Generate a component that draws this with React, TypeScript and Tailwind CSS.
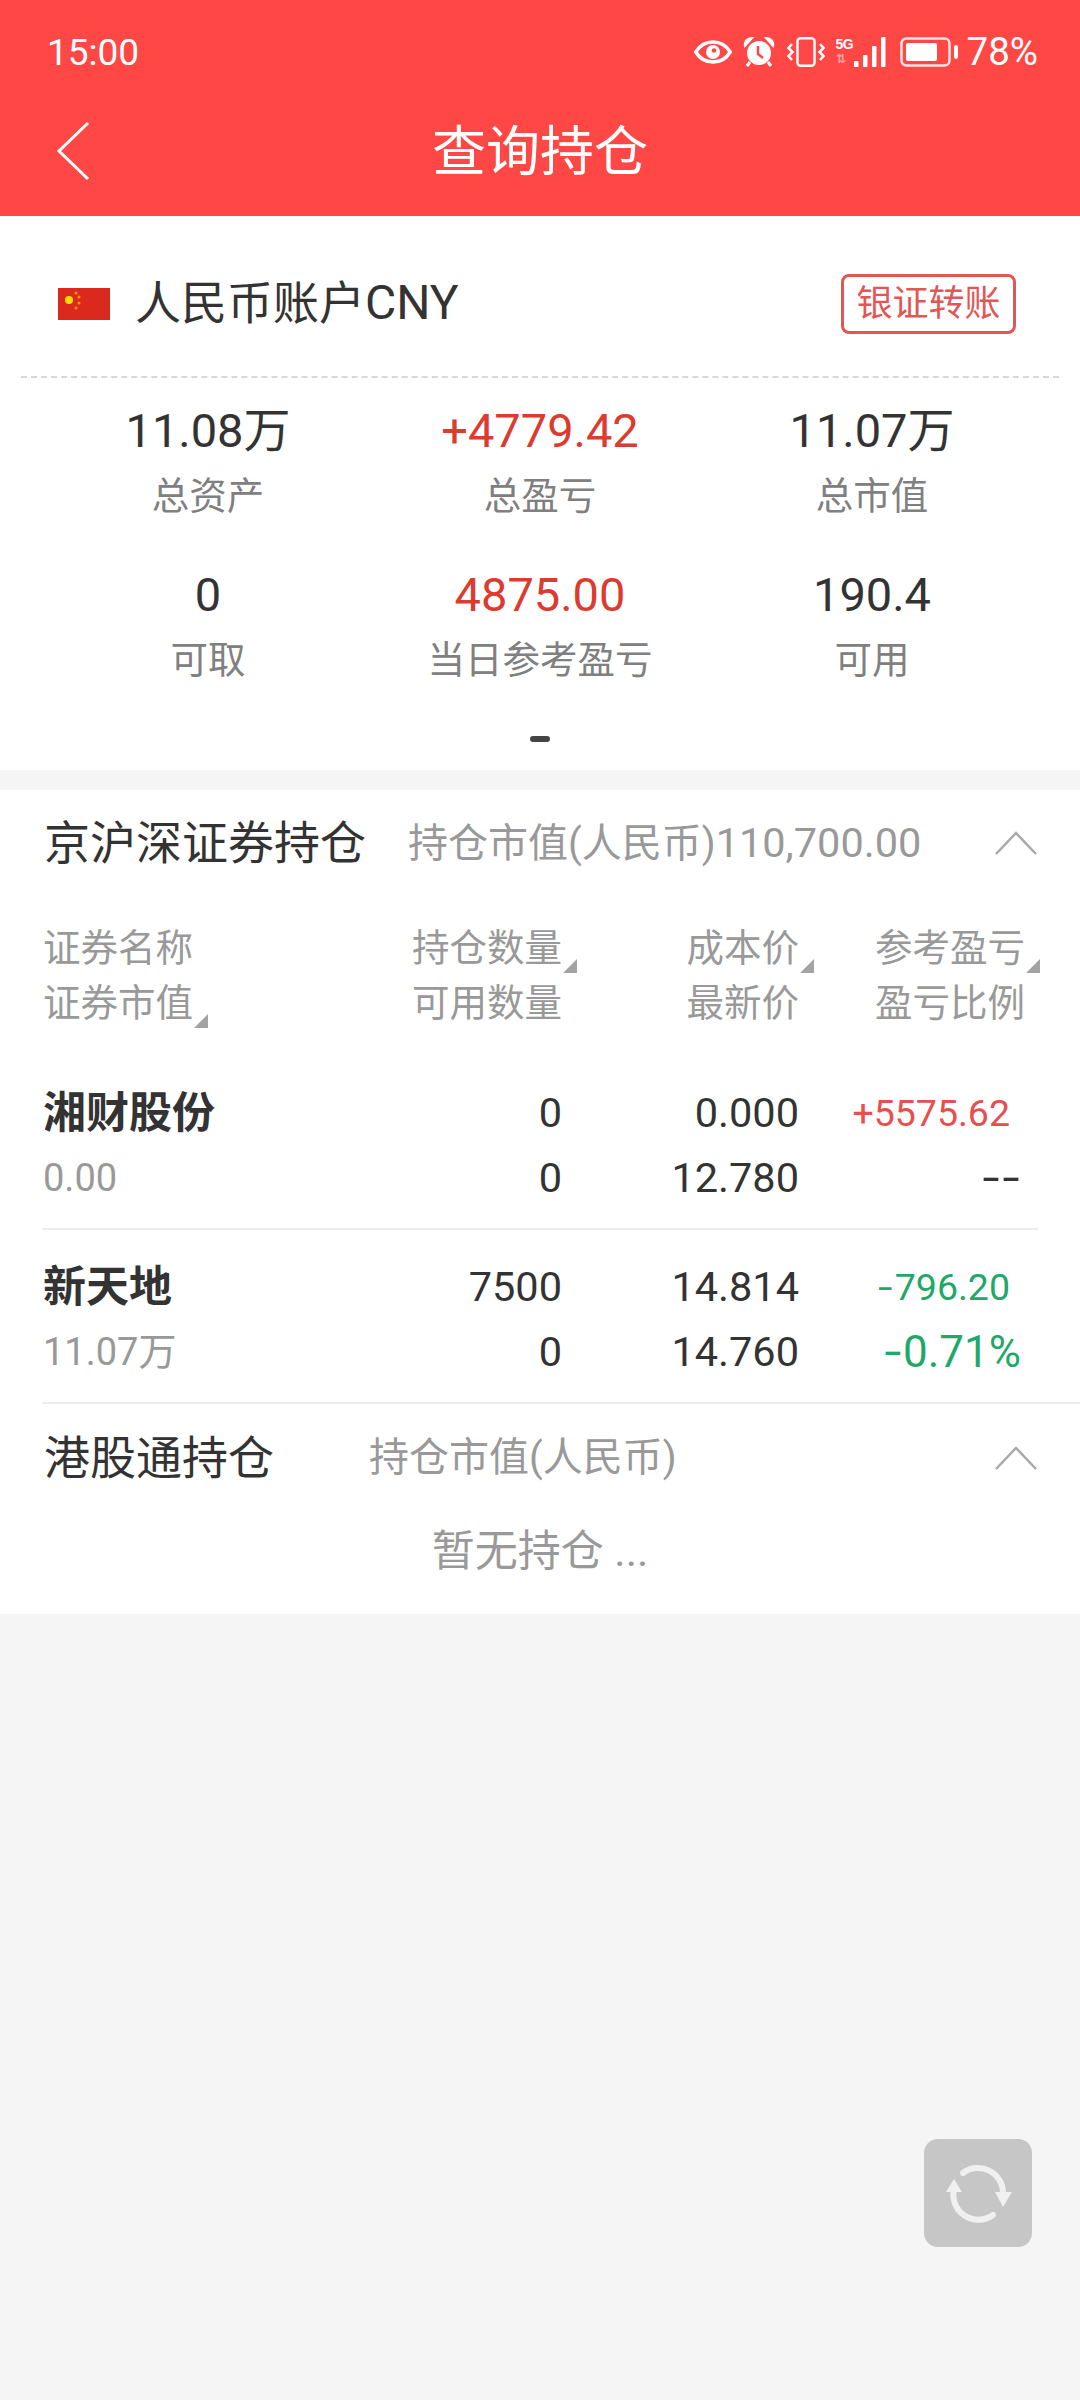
const FONT = "font-['Roboto','Noto_Sans_CJK_SC',sans-serif]";

const stats = [
  [
    { value: '11.08万', label: '总资产' },
    { value: '+4779.42', label: '总盈亏', red: true },
    { value: '11.07万', label: '总市值' },
  ],
  [
    { value: '0', label: '可取' },
    { value: '4875.00', label: '当日参考盈亏', red: true },
    { value: '190.4', label: '可用' },
  ],
];

function StatusIcons() {
  return (
    <div className="flex items-center">
      <svg width="38" height="24" viewBox="0 0 38 24" fill="none">
        <path d="M1.800 12C6 5 12 2 19 2s13 3 17.200 10C32 19 26 22 19 22S6 19 1.800 12Z" stroke="#fff" strokeWidth="3.500" />
        <circle cx="19" cy="12" r="7" fill="#fff" />
        <circle cx="20" cy="10.500" r="2.200" fill="#ff4745" />
      </svg>
      <svg className="ml-[11px]" width="32" height="30" viewBox="0 0 32 30" fill="none">
        <circle cx="16" cy="16" r="12" fill="#fff" />
        <path d="M2 9c-1-4 2-8 7-8L2 9ZM30 9c1-4-2-8-7-8L30 9Z" fill="#fff" stroke="#fff" strokeWidth="2" />
        <path d="M7 25l-3 4M25 25l3 4" stroke="#fff" strokeWidth="3" />
        <path d="M15 9v8l5 4" stroke="#ff4745" strokeWidth="2.500" />
      </svg>
      <svg className="ml-[12px]" width="38" height="30" viewBox="0 0 38 30" fill="none">
        <rect x="10.500" y="1.200" width="17" height="27.600" rx="3" stroke="#fff" strokeWidth="2.400" />
        <path d="M5 7L1.500 11l4 4-4 4 3.500 4M33 7l3.500 4-4 4 4 4-3.500 4" stroke="#fff" strokeWidth="2.500" />
      </svg>
      <div className="ml-[11px] flex h-[30px] w-[18px] flex-col items-start justify-start font-['Liberation_Sans',sans-serif]">
        <span className="text-[14px] leading-[14px] font-bold tracking-[-0.5px] text-white">5G</span>
        <span className="mt-[2px] text-[12px] leading-[12px] font-bold text-[#ff9d9c]">⇅</span>
      </div>
      <svg width="32" height="30" viewBox="0 0 32 30" fill="#fff">
        <rect x="0" y="24" width="4.500" height="6" rx="1" />
        <rect x="9" y="18" width="4.500" height="12" rx="1" />
        <rect x="18" y="9" width="4.500" height="21" rx="1" />
        <rect x="27" y="0" width="4.500" height="30" rx="1" />
      </svg>
      <svg className="ml-[14px]" width="58" height="30" viewBox="0 0 58 30" fill="none">
        <rect x="1.500" y="1.500" width="48" height="27" rx="5" stroke="#fff" strokeWidth="2.500" opacity="0.85" />
        <rect x="6" y="6" width="31" height="18" rx="2" fill="#fff" />
        <rect x="54" y="8" width="4" height="14" rx="2" fill="#fff" />
      </svg>
      <span className="ml-[9px] text-[38.5px] leading-none text-white">78%</span>
    </div>
  );
}

function Triangle() {
  return (
    <svg className="absolute bottom-[3px] right-[-15px]" width="14" height="14" viewBox="0 0 14 14">
      <polygon points="14,0 14,14 0,14" fill="#a3a3a3" />
    </svg>
  );
}

function Chevron() {
  return (
    <svg width="44" height="26" viewBox="0 0 44 26" fill="none">
      <path d="M2 24L22 3l20 21" stroke="#a8a8a8" strokeWidth="2.500" />
    </svg>
  );
}

function HeadCell({ text, sort }: { text: string; sort?: boolean }) {
  return (
    <span className="relative inline-block text-[37.5px] leading-[55px] text-[#999999]">
      {text}
      {sort && <Triangle />}
    </span>
  );
}

// the hyphens in the picture are much wider than Roboto's
function Signed({ text }: { text: string }) {
  const dashes = text.match(/^-+/)?.[0] ?? '';
  return (
    <>
      {dashes.split('').map((d, i) => (
        <span key={i} className="mx-[4px] inline-block scale-x-[1.4]">
          {d}
        </span>
      ))}
      {text.slice(dashes.length)}
    </>
  );
}

const rows = [
  {
    name: '湘财股份',
    mv: '0.00',
    qty: '0',
    avail: '0',
    cost: '0.000',
    last: '12.780',
    pl: '+5575.62',
    ratio: '--',
    plColor: 'text-[#e84e4e]',
    ratioColor: 'text-[#333333]',
  },
  {
    name: '新天地',
    mv: '11.07万',
    qty: '7500',
    avail: '0',
    cost: '14.814',
    last: '14.760',
    pl: '-796.20',
    ratio: '-0.71%',
    plColor: 'text-[#1fa868]',
    ratioColor: 'text-[#1fa868]',
  },
];

export default function App() {
  return (
    <div className={`flex h-[2400px] w-[1080px] flex-col overflow-hidden bg-[#f5f5f5] ${FONT}`}>
      <header className="h-[216px] bg-[#ff4745] text-white">
        <div className="flex h-[104px] items-center justify-between pr-[42px] pl-[47px]">
          <span className="text-[37px] leading-none">15:00</span>
          <StatusIcons />
        </div>
        <div className="relative flex h-[92px] items-center justify-center pt-[6px]">
          <svg className="absolute top-[17px] left-[56px]" width="34" height="60" viewBox="0 0 34 60" fill="none">
            <path d="M32 2L3 30l29 28" stroke="#fff" strokeWidth="3" />
          </svg>
          <h1 className="text-[54px] leading-none font-normal">查询持仓</h1>
        </div>
      </header>

      <section className="h-[554px] bg-white">
        <div className="flex h-[160px] items-center justify-between pt-[16px] pr-[64px] pl-[58px]">
          <div className="flex items-center">
            <svg width="52" height="32" viewBox="0 0 52 32">
              <rect width="52" height="32" fill="#dc291e" />
              <circle cx="11" cy="12" r="4" fill="#ffde00" />
              <circle cx="18" cy="5" r="1.500" fill="#ff9d00" />
              <circle cx="21" cy="9" r="1.500" fill="#ff9d00" />
              <circle cx="21" cy="15" r="1.500" fill="#ff9d00" />
              <circle cx="18" cy="20" r="1.500" fill="#ff9d00" />
            </svg>
            <span className="ml-[25px] mb-[2px] text-[46px] leading-none text-[#333333]">
              人民币账户<span className="text-[48px]">CNY</span>
            </span>
          </div>
          <button className="flex h-[60px] w-[175px] items-center justify-center rounded-[8px] border-[3px] border-[#e25656] text-[36px] leading-none text-[#e25656]">
            银证转账
          </button>
        </div>
        <div className="mx-[21px] border-t-2 border-dashed border-[#d8d8d8]" />
        <div className="grid grid-cols-[332px_332px_332px] justify-center pt-[22px]">
          {stats.flat().map((s) => (
            <div key={s.label} className="flex h-[164px] flex-col items-center">
              <span className={`text-[47px] leading-[62px] ${s.red ? 'text-[#dc3b2f]' : 'text-[#333333]'}`}>{s.value}</span>
              <span className="text-[37.5px] leading-[68px] text-[#808080]">{s.label}</span>
            </div>
          ))}
        </div>
        <div className="mx-auto mt-[8px] h-[6px] w-[20px] rounded-full bg-[#444444]" />
      </section>

      <section className="mt-[20px] h-[824px] bg-white">
        <div className="flex h-[104px] items-center justify-between pt-[2px] pr-[42px] pl-[44px]">
          <div className="flex items-center">
            <span className="text-[46px] leading-none text-[#333333]">京沪深证券持仓</span>
            <span className="ml-[42px] text-[40px] leading-none text-[#999999]">
              持仓市值(人民币)<span className="text-[41.5px]">110,700.00</span>
            </span>
          </div>
          <Chevron />
        </div>

        <div className="mt-[27px] grid grid-cols-[351px_168px_237px_226px] pl-[43px] text-right">
          <div className="text-left">
            <HeadCell text="证券名称" />
          </div>
          <div>
            <HeadCell text="持仓数量" sort />
          </div>
          <div>
            <HeadCell text="成本价" sort />
          </div>
          <div>
            <HeadCell text="参考盈亏" sort />
          </div>
          <div className="text-left">
            <HeadCell text="证券市值" sort />
          </div>
          <div>
            <HeadCell text="可用数量" />
          </div>
          <div>
            <HeadCell text="最新价" />
          </div>
          <div>
            <HeadCell text="盈亏比例" />
          </div>
        </div>

        <div className="mt-[25px]">
          {rows.map((r, i) => (
            <div
              key={r.name}
              className={`ml-[43px] grid h-[174px] grid-cols-[351px_168px_237px_226px] content-start border-b-2 border-[#ececec] pt-[24px] text-right ${
                i === 0 ? 'mr-[42px]' : ''
              }`}
            >
              <span className="text-left text-[43px] leading-[66px] font-bold text-[#333333]">{r.name}</span>
              <span className="text-[41.5px] leading-[66px] text-[#333333]">{r.qty}</span>
              <span className="text-[41.5px] leading-[66px] text-[#333333]">{r.cost}</span>
              <span className={`pr-[15px] text-[37.5px] leading-[66px] ${r.plColor}`}>
                <Signed text={r.pl} />
              </span>
              <span className="text-left text-[38px] leading-[64px] text-[#999999]">{r.mv}</span>
              <span className="text-[41.5px] leading-[64px] text-[#333333]">{r.avail}</span>
              <span className="text-[41.5px] leading-[64px] text-[#333333]">{r.last}</span>
              <span className={`pr-[4px] text-[44px] leading-[64px] ${r.ratioColor}`}>
                <Signed text={r.ratio} />
              </span>
            </div>
          ))}
        </div>

        <div className="flex h-[108px] items-center justify-between pr-[42px] pl-[44px]">
          <div className="flex items-center">
            <span className="text-[46px] leading-none text-[#333333]">港股通持仓</span>
            <span className="ml-[95px] text-[40px] leading-none text-[#999999]">持仓市值(人民币)</span>
          </div>
          <Chevron />
        </div>
        <div className="pt-[7px] text-center text-[43px] leading-[64px] text-[#999999]">暂无持仓 ...</div>
      </section>

      <div className="flex flex-1 items-start justify-end pt-[525px] pr-[48px]">
        <div className="flex h-[108px] w-[108px] items-center justify-center rounded-[14px] bg-[#c6c6c6]">
          <svg width="108" height="108" viewBox="0 0 108 108" fill="none">
            <path d="M39 34A25 25 0 0 1 79 54" stroke="#f0f0f0" strokeWidth="6" strokeLinecap="round" />
            <path d="M30 50A25 25 0 0 0 69 76" stroke="#f0f0f0" strokeWidth="6" strokeLinecap="round" />
            <polygon points="71,53 88,53 79,68" fill="#f0f0f0" />
            <polygon points="22,53 38,53 30,40" fill="#f0f0f0" />
          </svg>
        </div>
      </div>
    </div>
  );
}
